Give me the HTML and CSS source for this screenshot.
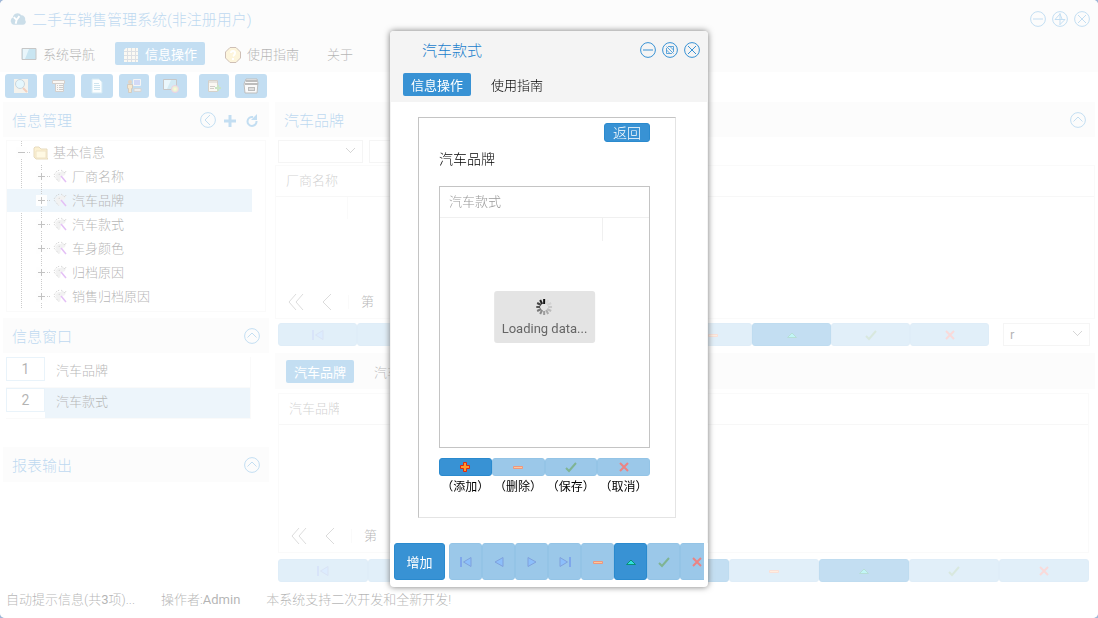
FILE: index.html
```html
<!DOCTYPE html>
<html lang="zh-CN">
<head>
  <meta charset="UTF-8">
  <meta name="viewport" content="width=device-width, initial-scale=1.0">
  <title>二手车销售管理系统</title>
  <link rel="stylesheet" href="styles.css">
</head>
<body>
  <!-- 图标 -->
  <svg class="sprite" aria-hidden="true">
    <symbol id="i-min" viewBox="0 0 16 16"><circle cx="8" cy="8" r="7.4"/><path d="M3 8h10"/></symbol>
    <symbol id="i-full" viewBox="0 0 16 16"><circle cx="8" cy="8" r="7.4"/><path d="M8 2v12M8 3L3 8.500h10L8 13.500M8 3l2 5"/></symbol>
    <symbol id="i-restore" viewBox="0 0 16 16"><circle cx="8" cy="8" r="7.4"/><path d="M4.500 6v5.500H10M6 4.500h5.500V10M4.500 4.500l7 7M4.500 8l3.500 3.500M8 4.500L11.500 8" stroke-width="0.8"/></symbol>
    <symbol id="i-close" viewBox="0 0 16 16"><circle cx="8" cy="8" r="7.4"/><path d="M4 4l8 8M12 4l-8 8"/></symbol>
    <symbol id="i-up" viewBox="0 0 16 16"><circle cx="8" cy="8" r="7.4"/><path d="M3.500 9.500L8 5l4.500 4.500"/></symbol>
    <symbol id="i-left" viewBox="0 0 16 16"><circle cx="8" cy="8" r="7.4"/><path d="M10 3L5 8l5 5"/></symbol>
    <symbol id="i-wand" viewBox="0 0 16 16"><path d="M2 6l3-3 3 0 1-2 1 2 3 0-1 3-4 2-1 5-3-2-1-3z" fill="#d4d4d4"/><path d="M1 6l3-4 3-1M1 7l5 6M8 1l4 3 1-2M6 6l1-2" fill="none" stroke="#666" stroke-dasharray="1 1"/><path d="M8 7l5 6" stroke="#a52ce0" stroke-width="1.500"/></symbol>
    <symbol id="i-first" viewBox="0 0 16 16"><path d="M2 3h2v10H2z" fill="#0050d8"/><path d="M13 3.500v9L5.500 8z" fill="#1a80f8" stroke="#0044b8"/></symbol>
    <symbol id="i-prev" viewBox="0 0 16 16"><path d="M12 3.500v9L4 8z" fill="#1a80f8" stroke="#0044b8"/></symbol>
    <symbol id="i-next" viewBox="0 0 16 16"><path d="M4 3.500v9L12 8z" fill="#1a80f8" stroke="#0044b8"/></symbol>
    <symbol id="i-last" viewBox="0 0 16 16"><path d="M12 3h2v10h-2z" fill="#0050d8"/><path d="M3 3.500v9L10.500 8z" fill="#1a80f8" stroke="#0044b8"/></symbol>
    <symbol id="i-add" viewBox="0 0 16 16"><path d="M6.500 3.500h3v3h3v3h-3v3h-3v-3h-3v-3h3z" fill="#ff9a2b" stroke="#e02a10"/></symbol>
    <symbol id="i-del" viewBox="0 0 16 16"><path d="M3.500 7.500h9v2h-9z" fill="#ff9030" stroke="#d83000"/></symbol>
    <symbol id="i-edit" viewBox="0 0 16 16"><path d="M3.500 10.500L8 6l4.500 4.500z" fill="#2fe0dc" stroke="#0a8f78"/></symbol>
    <symbol id="i-ok" viewBox="0 0 16 16"><path d="M3 9l3 3 7-8" fill="none" stroke="#006a28" stroke-width="2"/></symbol>
    <symbol id="i-no" viewBox="0 0 16 16"><path d="M4 4l8 8M12 4l-8 8" fill="none" stroke="#d80808" stroke-width="2"/></symbol>
    <symbol id="i-pfirst" viewBox="0 0 16 16"><path d="M8 0L1 8l7 8M15 0L8 8l7 8"/></symbol>
    <symbol id="i-pprev" viewBox="0 0 16 16"><path d="M11 0L3 8l8 8"/></symbol>
  </svg>

  <div class="app">
    <header class="app-header">
      <div class="title-bar">
        <svg class="logo" viewBox="0 0 17 14"><path d="M4 13a4 4 0 0 1-1-7.500A5 5 0 0 1 12 3a4 4 0 0 1 4 5 3 3 0 0 1-2 5z" fill="#5290b5"/><path d="M4 5l3 3 3-4M7 8l-1 4" fill="none" stroke="#fff" stroke-width="2"/></svg>
        <h1>二手车销售管理系统(非注册用户)</h1>
        <div class="tools">
          <button aria-label="最小化"><svg><use href="#i-min"/></svg></button>
          <button aria-label="全屏"><svg><use href="#i-full"/></svg></button>
          <button aria-label="关闭"><svg><use href="#i-close"/></svg></button>
        </div>
      </div>
      <nav class="tabs">
        <a href="#nav"><svg class="ico" viewBox="0 0 16 16"><path d="M1 1.500h14v11H1z" fill="#4ba7cf" stroke="#444"/><path d="M2 2h6L4 12H2z" fill="#b4e2f2"/></svg>系统导航</a>
        <a href="#info" class="active"><svg class="ico" viewBox="0 0 16 16"><path d="M3 1h12v14H1V3z" fill="#f1ebd8"/><path d="M1 4.500h14M1 8.500h14M1 12.500h14M4.500 1v14M8.500 1v14M12.500 1v14" stroke="#8d98a6"/></svg>信息操作</a>
        <a href="#guide"><svg class="ico" viewBox="0 0 16 16"><path d="M5 .500h6l4.500 4.500v6L11 15.500H5L.500 11V5z" fill="#f9dd8a" stroke="#5b2b0b"/><path d="M6 6q0-2 2-2t2 2-2 3M8 11v2" fill="none" stroke="#fff" stroke-width="2"/></svg>使用指南</a>
        <a href="#about">关于</a>
      </nav>
    </header>

    <div class="toolbar">
      <button aria-label="查询"><svg viewBox="0 0 16 16"><path d="M1 1h14v14H1z" fill="#ddd6c4"/><circle cx="7" cy="6" r="4.500" fill="#a9e3f7" stroke="#49758e"/><path d="M10 10l4 4" stroke="#d2622a" stroke-width="2"/></svg></button>
      <button aria-label="表单"><svg viewBox="0 0 16 16"><path d="M1.500 2.500h12v3h-12zM4.500 5.500h8v8h-8z" fill="#e9e4da" stroke="#6c5f56"/><path d="M6 7.500h1M8 7.500h4M6 9.500h1M8 9.500h4M6 11.500h1M8 11.500h4" stroke="#555"/></svg></button>
      <button aria-label="文档"><svg viewBox="0 0 16 16"><path d="M3 1h7l3 3v11H3z" fill="#f2fbff" stroke="#6fb5d6"/><path d="M5 5.500h5M5 7.500h6M5 9.500h6M5 11.500h6" stroke="#5aa6c8"/></svg></button>
      <button class="narrow" aria-label="用户"><svg viewBox="0 0 16 16"><path d="M7.500 1.500h7v6h-7z" fill="#6d83e0" stroke="#ddd"/><path d="M8 10.500h7v3H8z" fill="#c7c7c7" stroke="#777"/><circle cx="4" cy="4" r="2" fill="#a2703a"/><path d="M1.500 6.500h5v4H5.500v4h-3v-4h-1z" fill="#e4b25a" stroke="#6c5533"/></svg></button>
      <button aria-label="显示设置"><svg viewBox="0 0 16 16"><path d="M.500 1.500h13v10h-13z" fill="#6cbad8" stroke="#444"/><path d="M1 2h7l-4 9H1z" fill="#b9e5f3"/><circle cx="12" cy="11" r="3.500" fill="#b5d878" stroke="#c35ba0"/><circle cx="12" cy="11" r="1.500" fill="#f4e374"/></svg></button>
      <span class="gap"></span>
      <button class="narrow" aria-label="新增窗口"><svg viewBox="0 0 16 16"><path d="M2.500 2.500h9v11h-9z" fill="#eee7d8" stroke="#74644f"/><path d="M2 4h10M4 8.500h5M4 10.500h4" stroke="#665b4b"/><path d="M12 7v6M9 10h6" stroke="#46a341" stroke-width="2"/></svg></button>
      <button aria-label="打印"><svg viewBox="0 0 16 16"><path d="M3 1h11l1 4-1 10H2L1 6z" fill="#eee" stroke="#222"/><path d="M3 3h11M2 6h13" stroke="#222" stroke-width="2"/><path d="M5 9h7v4H5z" fill="#222"/><path d="M6 11h5" stroke="#fff"/></svg></button>
    </div>

    <div class="main">
      <aside class="side">
        <div class="panel-head">
          <h2>信息管理</h2>
          <div class="tools">
            <button aria-label="收起"><svg><use href="#i-left"/></svg></button>
            <button aria-label="添加"><svg viewBox="0 0 16 16"><path d="M8 3v12M2 9h12" stroke-width="3"/></svg></button>
            <button aria-label="刷新"><svg viewBox="0 0 16 16"><path d="M9 5A4.500 4.500 0 1 0 12.500 9" stroke-width="2"/><path d="M13 2v6H7z" fill="#3892d4" stroke="none"/></svg></button>
          </div>
        </div>
        <div class="tree">
          <div class="node root"><i class="twig minus"></i><svg class="folder" viewBox="0 0 16 14"><path d="M1 11V2l1-1h4l2 2h6v9l1 1H3z" fill="#f6cf69" stroke="#ad8527"/><path d="M3 5h10v7H3z" fill="#ffeaa0" stroke="#c9a044"/></svg>基本信息</div>
          <ul>
            <li class="node"><i class="twig"></i><svg class="wand"><use href="#i-wand"/></svg>厂商名称</li>
            <li class="node selected"><i class="twig"></i><svg class="wand"><use href="#i-wand"/></svg>汽车品牌</li>
            <li class="node"><i class="twig"></i><svg class="wand"><use href="#i-wand"/></svg>汽车款式</li>
            <li class="node"><i class="twig"></i><svg class="wand"><use href="#i-wand"/></svg>车身颜色</li>
            <li class="node"><i class="twig"></i><svg class="wand"><use href="#i-wand"/></svg>归档原因</li>
            <li class="node"><i class="twig"></i><svg class="wand"><use href="#i-wand"/></svg>销售归档原因</li>
          </ul>
        </div>
        <div class="panel-head">
          <h2>信息窗口</h2>
          <div class="tools"><button aria-label="收起"><svg><use href="#i-up"/></svg></button></div>
        </div>
        <ol class="windows">
          <li><button>1</button><span>汽车品牌</span></li>
          <li class="selected"><button>2</button><span>汽车款式</span></li>
        </ol>
        <div class="panel-head">
          <h2>报表输出</h2>
          <div class="tools"><button aria-label="收起"><svg><use href="#i-up"/></svg></button></div>
        </div>
      </aside>

      <section class="content">
        <div class="panel-head">
          <h2>汽车品牌</h2>
          <div class="tools"><button aria-label="收起"><svg><use href="#i-up"/></svg></button></div>
        </div>
        <div class="filters">
          <select class="combo" aria-label="字段"><option></option></select>
          <input class="keyword" type="text" aria-label="关键字">
        </div>
        <div class="grid">
          <table>
            <thead><tr><th>厂商名称</th><th></th></tr></thead>
            <tbody><tr><td></td><td></td></tr></tbody>
          </table>
          <div class="pager">
            <button aria-label="首页"><svg><use href="#i-pfirst"/></svg></button>
            <button aria-label="上一页"><svg><use href="#i-pprev"/></svg></button>
            <i></i><span>第</span>
          </div>
        </div>
        <div class="nav-row">
          <div class="nav-buttons">
            <button disabled aria-label="首条"><svg><use href="#i-first"/></svg></button>
            <button disabled aria-label="上一条"><svg><use href="#i-prev"/></svg></button>
            <button disabled aria-label="下一条"><svg><use href="#i-next"/></svg></button>
            <button disabled aria-label="末条"><svg><use href="#i-last"/></svg></button>
            <button aria-label="添加"><svg><use href="#i-add"/></svg></button>
            <button disabled aria-label="删除"><svg><use href="#i-del"/></svg></button>
            <button aria-label="编辑"><svg><use href="#i-edit"/></svg></button>
            <button disabled aria-label="保存"><svg><use href="#i-ok"/></svg></button>
            <button disabled aria-label="取消"><svg><use href="#i-no"/></svg></button>
          </div>
          <select class="combo" aria-label="模式"><option>r</option></select>
        </div>

        <div class="sub-tabs tabs">
          <a href="#brand" class="active">汽车品牌</a>
          <a href="#style">汽车款式</a>
        </div>
        <div class="detail">
          <div class="grid">
            <table>
              <thead><tr><th>汽车品牌</th><th></th></tr></thead>
            </table>
            <div class="pager">
              <button aria-label="首页"><svg><use href="#i-pfirst"/></svg></button>
              <button aria-label="上一页"><svg><use href="#i-pprev"/></svg></button>
              <i></i><span>第</span>
            </div>
          </div>
          <div class="nav-buttons">
            <button disabled aria-label="首条"><svg><use href="#i-first"/></svg></button>
            <button disabled aria-label="上一条"><svg><use href="#i-prev"/></svg></button>
            <button disabled aria-label="下一条"><svg><use href="#i-next"/></svg></button>
            <button disabled aria-label="末条"><svg><use href="#i-last"/></svg></button>
            <button aria-label="添加"><svg><use href="#i-add"/></svg></button>
            <button disabled aria-label="删除"><svg><use href="#i-del"/></svg></button>
            <button aria-label="编辑"><svg><use href="#i-edit"/></svg></button>
            <button disabled aria-label="保存"><svg><use href="#i-ok"/></svg></button>
            <button disabled aria-label="取消"><svg><use href="#i-no"/></svg></button>
          </div>
        </div>
      </section>
    </div>

    <footer class="status">
      <span>自动提示信息(共<b>3</b>项)...</span>
      <span>操作者:<b>Admin</b></span>
      <span>本系统支持二次开发和全新开发!</span>
    </footer>
  </div>

  <!-- 弹出窗口 -->
  <div class="mask">
    <div class="dialog" role="dialog" aria-labelledby="dialog-title">
      <div class="dialog-head">
        <div class="title-bar">
          <h2 id="dialog-title">汽车款式</h2>
          <div class="tools">
            <button aria-label="最小化"><svg><use href="#i-min"/></svg></button>
            <button aria-label="还原"><svg><use href="#i-restore"/></svg></button>
            <button aria-label="关闭"><svg><use href="#i-close"/></svg></button>
          </div>
        </div>
        <nav class="tabs">
          <a href="#d-info" class="active">信息操作</a>
          <a href="#d-guide">使用指南</a>
        </nav>
      </div>
      <div class="dialog-body">
        <div class="form">
          <button class="back">返回</button>
          <p class="form-label">汽车品牌</p>
          <div class="list">
            <table>
              <colgroup><col><col class="col-last"></colgroup>
              <thead><tr><th colspan="2">汽车款式</th></tr></thead>
              <tbody><tr><td></td><td></td></tr></tbody>
            </table>
            <div class="loading">
              <svg viewBox="0 0 16 16" stroke-width="2">
                <path d="M8 0v5" stroke="#111"/>
                <path d="M4 1l2 4" stroke="#222"/>
                <path d="M1 4l4 2" stroke="#444"/>
                <path d="M0 8h4" stroke="#555"/>
                <path d="M1 12l4-2" stroke="#777"/>
                <path d="M4 15l2-4" stroke="#8c8c8c"/>
                <path d="M8 16v-4" stroke="#9c9c9c"/>
                <path d="M12 15l-2-4" stroke="#aaa"/>
                <path d="M15 12l-4-2" stroke="#bbb"/>
                <path d="M16 8h-4" stroke="#c8c8c8"/>
                <path d="M15 4l-4 2" stroke="#d2d2d2"/>
                <path d="M12 1l-2 4" stroke="#d8d8d8"/>
              </svg>
              <span>Loading data...</span>
            </div>
          </div>
          <div class="actions">
            <button id="b-add"><svg><use href="#i-add"/></svg></button>
            <button id="b-del" disabled><svg><use href="#i-del"/></svg></button>
            <button id="b-ok" disabled><svg><use href="#i-ok"/></svg></button>
            <button id="b-no" disabled><svg><use href="#i-no"/></svg></button>
            <label for="b-add">（添加）</label>
            <label for="b-del">（删除）</label>
            <label for="b-ok">（保存）</label>
            <label for="b-no">（取消）</label>
          </div>
        </div>
      </div>
      <div class="dialog-foot">
        <button class="append">增加</button>
        <div class="nav-buttons">
          <button disabled aria-label="首条"><svg><use href="#i-first"/></svg></button>
          <button disabled aria-label="上一条"><svg><use href="#i-prev"/></svg></button>
          <button disabled aria-label="下一条"><svg><use href="#i-next"/></svg></button>
          <button disabled aria-label="末条"><svg><use href="#i-last"/></svg></button>
          <button disabled aria-label="删除"><svg><use href="#i-del"/></svg></button>
          <button aria-label="编辑"><svg><use href="#i-edit"/></svg></button>
          <button disabled aria-label="保存"><svg><use href="#i-ok"/></svg></button>
          <button disabled aria-label="取消"><svg><use href="#i-no"/></svg></button>
        </div>
      </div>
    </div>
  </div>
</body>
</html>
```
FILE: styles.css
```css
* {
  box-sizing: border-box;
}

body {
  margin: 0;
  font-family: Roboto, "Noto Sans CJK SC", sans-serif;
  font-size: 13px;
  font-weight: 300;
  line-height: 20px;
  color: #000;
  background: #a0b8d8;
}

h1, h2, p, ul, ol {
  margin: 0;
  padding: 0;
  font-weight: 300;
  list-style: none;
}

button, select, input {
  font: inherit;
  color: inherit;
  margin: 0;
}

button {
  display: flex;
  align-items: center;
  justify-content: center;
  padding: 0;
  border: 0;
  background: none;
}

a {
  color: inherit;
  text-decoration: none;
}

b {
  font-weight: 400;
}

table {
  width: 100%;
  border-collapse: collapse;
  table-layout: fixed;
}

th {
  font-weight: 300;
  text-align: left;
  color: #666;
}

.sprite {
  display: none;
}

.app {
  display: flex;
  flex-direction: column;
  height: 100vh;
  padding: 0 3px;
  border-radius: 5px;
  background: #fff;
  overflow: hidden;
}

/* 标题栏 */
.app-header {
  margin: 0 -3px;
  height: 72px;
  background: #f4f4f4;
}

.title-bar {
  display: flex;
  align-items: center;
  height: 37px;
  padding: 0 8px 0 10px;
}

.title-bar h1, .title-bar h2, .panel-head h2 {
  flex: 1;
  padding-top: 2px;
  font-size: 15px;
  color: #1b80cc;
}

.logo {
  width: 16px;
  height: 14px;
  margin-right: 6px;
}

.tools {
  display: flex;
  gap: 6px;
}

.tools svg {
  display: block;
  width: 16px;
  height: 16px;
  fill: none;
  stroke: #3892d4;
}

.tabs {
  display: flex;
  gap: 12px;
  padding: 5px 13px;
}

.tabs a {
  display: flex;
  align-items: center;
  height: 23px;
  padding: 2px 8px 0;
  border-radius: 2px;
}

.tabs .active {
  color: #fff;
  font-weight: 400;
  background: #3892d4;
}

.ico {
  width: 16px;
  height: 16px;
  margin-right: 6px;
}

.toolbar {
  display: flex;
  gap: 6px;
  padding: 2px;
  height: 30px;
}

.toolbar button {
  width: 32px;
  height: 24px;
  border-radius: 3px;
  background: #3892d4;
}

.toolbar .narrow {
  width: 30px;
}

.toolbar svg {
  width: 16px;
  height: 16px;
}

.main {
  flex: 1;
  display: flex;
  gap: 6px;
  min-height: 0;
}

/* 左侧 */
.side {
  width: 266px;
}

.panel-head {
  display: flex;
  align-items: center;
  height: 35px;
  padding: 0 9px;
  background: #f4f4f4;
}

.tree {
  margin: 3px 3px 6px;
  height: 172px;
  border: 1px solid #eee;
  overflow: hidden;
}

.node {
  display: flex;
  align-items: center;
  height: 24px;
  padding-left: 29px;
  margin-right: 13px;
  border-bottom: 1px solid transparent;
  background-clip: padding-box;
}

.root {
  padding-left: 9px;
}

.root, .tree ul {
  background: repeating-linear-gradient(#555 0 1px, transparent 1px 2px) 14px 0 / 1px 100% no-repeat;
}

.tree ul .node {
  background-image: repeating-linear-gradient(#555 0 1px, transparent 1px 2px);
  background-position: 34px 0;
  background-size: 1px 100%;
  background-repeat: no-repeat;
}

.node .twig {
  width: 11px;
  height: 11px;
  margin-right: 6px;
  background:
    linear-gradient(#333, #333) center / 7px 1px no-repeat,
    linear-gradient(#333, #333) center / 1px 7px no-repeat,
    #fafafa;
}

.node .minus {
  background:
    linear-gradient(#333, #333) center / 7px 1px no-repeat,
    #fafafa;
}

.node .twig::after {
  content: '';
  display: block;
  width: 4px;
  height: 1px;
  margin: 5px 0 0 11px;
  background: repeating-linear-gradient(90deg, #555 0 1px, transparent 1px 2px);
}

.folder, .wand {
  width: 16px;
  height: 16px;
  margin-right: 3px;
}

.folder {
  height: 14px;
  margin-right: 4px;
}

.node.selected, .windows .selected span {
  background-color: #c1ddf1;
}

.windows {
  padding: 4px 18px 28px 3px;
}

.windows li {
  display: flex;
  height: 31px;
  border-bottom: 1px solid #eee;
}

.windows button {
  width: 39px;
  height: 24px;
  border: 1px solid #b5d5ee;
  font-size: 14px;
  font-weight: 400;
}

.windows span {
  flex: 1;
  padding: 4px 11px;
  border-right: 1px solid #eee;
}

/* 右侧 */
.content {
  flex: 1;
  display: flex;
  flex-direction: column;
  min-width: 0;
}

.filters {
  display: flex;
  gap: 6px;
  padding: 3px 3px 2px;
}

.combo, .keyword {
  height: 23px;
  padding: 0 6px;
  border: 1px solid #ddd;
  background: #fff;
}

.combo {
  width: 85px;
  appearance: none;
  background:
    linear-gradient(45deg, transparent 6px, #777 6px 7px, transparent 7px) right 11px top 7px / 5px 9px no-repeat,
    linear-gradient(-45deg, transparent 6px, #777 6px 7px, transparent 7px) right 7px top 7px / 5px 9px no-repeat,
    #fff;
  font-weight: 400;
}

.keyword {
  width: 160px;
}

.grid {
  flex: 157 0 0;
  display: flex;
  flex-direction: column;
  min-height: 0;
  border: 1px solid #eee;
}

.grid th {
  height: 30px;
  padding: 1px 10px 0;
  border-bottom: 1px solid #e4e4e4;
  overflow: hidden;
  white-space: nowrap;
}

.grid th:first-child {
  width: 71px;
  padding-right: 0;
}

.grid td {
  height: 23px;
}

.grid td:first-child {
  border-right: 1px solid #eee;
}

.pager {
  display: flex;
  align-items: center;
  gap: 12px;
  height: 33px;
  margin-top: auto;
  padding-left: 12px;
}

.pager button:first-child {
  margin-right: 4px;
}

.pager svg {
  width: 16px;
  height: 16px;
  fill: none;
  stroke: #888;
}

.pager i {
  width: 1px;
  height: 14px;
  background: #eee;
}

.nav-row {
  display: flex;
  gap: 14px;
  padding: 4px 5px 7px 3px;
}

.nav-row .combo {
  width: 87px;
}

.nav-buttons {
  flex: 1;
  display: flex;
}

.nav-buttons button {
  flex: 1;
  height: 23px;
}

.nav-buttons button, .actions button, .back, .append {
  border: 1px solid #2a8ace;
  border-radius: 3px;
  background: #3892d4;
}

.nav-buttons button:disabled, .actions button:disabled {
  opacity: 0.5;
}

.nav-buttons svg, .actions svg {
  flex: none;
  width: 16px;
  height: 16px;
}

.sub-tabs {
  height: 36px;
  padding: 7px 11px;
  background: #f4f4f4;
}

.detail {
  flex: 195 0 0;
  display: flex;
  flex-direction: column;
  gap: 6px;
  min-height: 0;
  padding: 4px 6px 5px 3px;
}

.detail th:first-child {
  width: 60px;
}

.detail .nav-buttons {
  flex: none;
}

.status {
  display: flex;
  gap: 26px;
  height: 31px;
  padding: 3px;
}

/* 遮罩与弹窗 */
.mask {
  position: fixed;
  inset: 0;
  display: flex;
  align-items: center;
  justify-content: center;
  border-radius: 5px;
  background: rgba(255, 255, 255, 0.7);
}

.dialog {
  width: 318px;
  border-radius: 4px;
  background: #fff;
  box-shadow: 0 0 6px #777;
  overflow: hidden;
}

.dialog-head {
  height: 71px;
  background: #f4f4f4;
}

.dialog-head .title-bar {
  padding-left: 32px;
}

.dialog-body {
  padding: 15px 31px 25px 27px;
  border: solid #f4f4f4;
  border-width: 0 1px;
}

.form {
  display: flex;
  flex-direction: column;
  height: 401px;
  padding: 5px 25px 0 20px;
  border: 1px solid #c4c4c4;
  border-right-color: #e4e4e4;
  border-bottom-color: #e4e4e4;
}

.back {
  align-self: flex-end;
  width: 46px;
  height: 19px;
  font-size: 14px;
  color: #fff;
}

.form-label {
  padding: 7px 0 17px;
  font-size: 14px;
}

.list {
  position: relative;
  height: 262px;
  border: 1px solid #c4c4c4;
}

.list th {
  height: 30px;
  padding: 1px 9px 0;
  border-bottom: 1px solid #f0f0f0;
  color: #999;
}

.list td {
  height: 24px;
}

.list td:first-child {
  border-right: 1px solid #f0f0f0;
}

.col-last {
  width: 46px;
}

.loading {
  position: absolute;
  top: 50%;
  left: 50%;
  transform: translate(-50%, -50%);
  display: flex;
  flex-direction: column;
  align-items: center;
  gap: 4px;
  padding: 8px 8px 4px;
  border-radius: 3px;
  background: #e4e4e4;
  color: #666;
  font-weight: 400;
  white-space: nowrap;
}

.loading svg {
  width: 16px;
  height: 16px;
}

.actions {
  display: grid;
  grid-template-columns: repeat(4, 1fr);
  margin-top: 10px;
  font-size: 12px;
  text-align: center;
  text-spacing-trim: space-all;
  white-space: nowrap;
}

.actions button {
  height: 18px;
}

.actions label {
  padding-top: 1px;
  font-weight: 400;
}

.dialog-foot {
  display: flex;
  gap: 4px;
  padding: 0 4px 7px;
}

.append {
  flex: none;
  width: 51px;
  height: 37px;
  padding-top: 2px;
  font-weight: 400;
  color: #fff;
}

.dialog-foot .nav-buttons {
  overflow: hidden;
}

.dialog-foot .nav-buttons button {
  flex: 0 0 33px;
  height: 37px;
}
```
